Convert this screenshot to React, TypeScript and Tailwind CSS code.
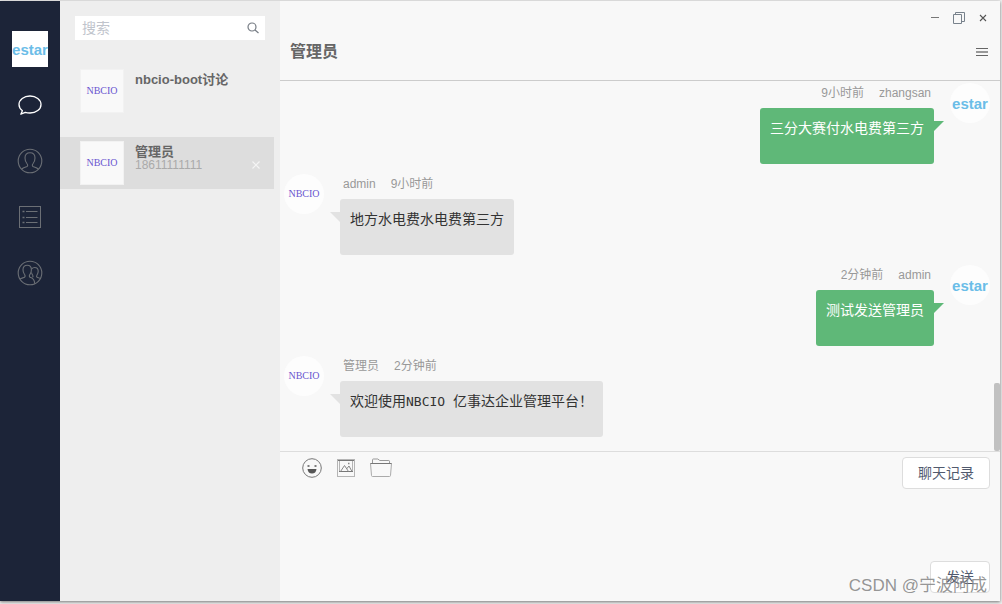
import React, { useState } from "react";

type Message = {
  id: number;
  name: string;
  time: string;
  mine: boolean;
  content: React.ReactNode;
};

const messages: Message[] = [
  {
    id: 1,
    name: "zhangsan",
    time: "9小时前",
    mine: true,
    content: "三分大赛付水电费第三方",
  },
  {
    id: 2,
    name: "admin",
    time: "9小时前",
    mine: false,
    content: "地方水电费水电费第三方",
  },
  {
    id: 3,
    name: "admin",
    time: "2分钟前",
    mine: true,
    content: "测试发送管理员",
  },
  {
    id: 4,
    name: "管理员",
    time: "2分钟前",
    mine: false,
    content: (
      <>
        欢迎使用
        <span className="font-['DejaVu_Sans_Mono',monospace] text-[13px]">
          NBCIO{" "}
        </span>
        亿事达企业管理平台！
      </>
    ),
  },
];

const contacts = [
  { id: 1, name: "nbcio-boot讨论", phone: "" },
  { id: 2, name: "管理员", phone: "18611111111" },
];

function NbcioLogo() {
  return (
    <span className="font-['Liberation_Serif',serif] text-[10px] leading-none text-[#6a55d0]">
      NBCIO
    </span>
  );
}

function EstarLogo() {
  return (
    <span className="font-['Liberation_Sans',sans-serif] text-[15px] leading-none font-bold text-[#6bbde8]">
      estar
    </span>
  );
}

function ChatIcon() {
  return (
    <svg width="24" height="24" viewBox="0 0 24 24" fill="none" stroke="#fff" strokeWidth="1.3">
      <path d="M4.4 17.7C2.3 16.1 1 14 1 11.5 1 6.6 5.900 3 12 3s11 3.600 11 8.500-4.900 8.500-11 8.500c-1.700 0-3.200-.2-4.700-.7L2.800 21.200l1.600-3.500z" strokeLinejoin="round" />
    </svg>
  );
}

function UserIcon() {
  return (
    <svg width="26" height="26" viewBox="0 0 26 26" fill="none" stroke="#6b6f75" strokeWidth="1.1">
      <circle cx="13" cy="13" r="11.8" />
      <path d="M4.7 21.2c1.300-1.700 3.400-2 5.300-2.700 1-.5.8-2-.1-3-1.200-1.400-1.900-3.300-1.900-5.500C8 6.600 9.900 4.800 13 4.800s5 1.800 5 5.200c0 2.200-.7 4.100-1.900 5.500-.9 1-1.100 2.500-.1 3 1.900.7 4 1 5.300 2.700" />
    </svg>
  );
}

function ListIcon() {
  return (
    <svg width="24" height="24" viewBox="0 0 24 24" fill="none" stroke="#6b6f75">
      <rect x="1.5" y="1.5" width="21" height="21" />
      <path d="M8 6.5h11.5M8 12.5h11.5M8 17.5h11.5" />
      <path d="M4.5 6.5h2M4.5 12.5h2M4.5 17.5h2" strokeWidth="1.5" />
    </svg>
  );
}

function GroupIcon() {
  return (
    <svg width="26" height="26" viewBox="0 0 26 26" fill="none" stroke="#6b6f75" strokeWidth="1.1">
      <circle cx="13" cy="13" r="11.8" />
      <path d="M3 19.200c1.300-1.400 3.300-1.200 4.500-2 .9-.7.6-1.900-.1-2.900C6.600 13.100 6 11.600 6 9.700 6 6.900 7.600 5.200 10.200 5.200s4.200 1.700 4.200 4.500c0 1.900-.5 3.400-1.400 4.600-.7 1-.9 2.200 0 2.900 1.500.8 4.500.8 4.700 6.500" />
      <path d="M14.700 9c.7-1 1.700-1.500 3-1.500 2.300 0 3.500 1.500 3.500 3.700 0 1.600-.5 2.800-1.200 3.800-.6.9-.6 1.700.1 2.200.9.5 2.200.5 3.300 1.300M14.500 12.500c.2 1 .6 1.800 1.100 2.500.6.9.6 1.700-.1 2.200" />
    </svg>
  );
}

function SearchIcon() {
  return (
    <svg width="12" height="12" viewBox="0 0 12 12" fill="none" stroke="#777d85" strokeWidth="1.2">
      <circle cx="5" cy="5" r="4" />
      <path d="M8 8l3.5 3" />
    </svg>
  );
}

function FaceIcon() {
  return (
    <svg width="20" height="20" viewBox="0 0 20 20" fill="none" stroke="#777">
      <circle cx="10" cy="10" r="9.3" />
      <path d="M5.5 11h9c-.3 3-2 4.5-4.5 4.5S5.8 14 5.5 11z" fill="#555" stroke="none" />
      <path d="M5.5 8h2M12.5 8h2" stroke="#555" strokeWidth="1.6" />
    </svg>
  );
}

function ImageIcon() {
  return (
    <svg width="20" height="20" viewBox="0 0 20 20" fill="none" stroke="#888">
      <rect x="1.5" y="1.5" width="17" height="17" stroke="#b5b5b5" />
      <path d="M3.5 2.5v11M16.5 2.5v11" stroke="#b5b5b5" />
      <path d="M2 2.5h16M3 13.5h14" stroke="#777" />
      <path d="M4.5 13.5l4-6 4 6M10.5 11l2.5-3 3 5.5" />
      <path d="M12 5.5h1.5" strokeWidth="1.5" />
    </svg>
  );
}

function FolderIcon() {
  return (
    <svg width="22" height="20" viewBox="0 0 22 20" fill="none" stroke="#888">
      <path d="M.5 5.5h21l-1 12c0 .6-.4 1-1 1h-17c-.6 0-1-.4-1-1l-1-12z" stroke="#aaa" />
      <path d="M2.5 5V1.7c0-.4.3-.7.7-.7h4.6l2 1.5h9c.4 0 .7.3.7.7V5" stroke="#999" />
      <path d="M.5 5.5h21" stroke="#777" />
    </svg>
  );
}

function SideBar() {
  return (
    <nav className="w-[60px] shrink-0 bg-[#1c2438] flex flex-col items-center pt-[30px]">
      <div className="size-9 bg-white flex items-center justify-center">
        <EstarLogo />
      </div>
      <div className="mt-2.5 flex flex-col">
        <button aria-label="消息" className="size-14 flex items-center justify-center">
          <ChatIcon />
        </button>
        <button aria-label="联系人" className="size-14 flex items-center justify-center">
          <UserIcon />
        </button>
        <button aria-label="列表" className="size-14 flex items-center justify-center">
          <ListIcon />
        </button>
        <button aria-label="群组" className="size-14 flex items-center justify-center">
          <GroupIcon />
        </button>
      </div>
    </nav>
  );
}

function ContactList() {
  const [active, setActive] = useState(2);

  return (
    <aside className="w-[220px] shrink-0 bg-[#eee] pt-[15px]">
      <div className="ml-[15px] mr-[15px] h-6 bg-white flex items-center pl-[7px] pr-1.5">
        <input
          type="text"
          aria-label="搜索"
          placeholder="搜索"
          className="min-w-0 flex-1 text-[14px] leading-5 outline-none placeholder:text-[#c0c4cc]"
        />
        <SearchIcon />
      </div>
      <ul className="mt-[25px] mr-1.5 flex flex-col gap-5">
        {contacts.map((item) => (
          <li
            key={item.id}
            onClick={() => setActive(item.id)}
            className={
              "h-[52px] flex pl-5 pr-3 " +
              (active === item.id ? "bg-[#ddd]" : "")
            }
          >
            <div className="mt-1 size-11 shrink-0 border border-[#f2f2f2] bg-[#f9f9f9] flex items-center justify-center">
              <NbcioLogo />
            </div>
            <div className="ml-[11px] flex-1 pt-2">
              <h2 className="text-[13px] leading-[14px] font-bold text-[#666]">
                {item.name}
              </h2>
              <p className="text-[12px] leading-3 text-[#aaa]">{item.phone}</p>
            </div>
            {active === item.id && (
              <button aria-label="删除" className="mt-1 text-[#f4f4f4]">
                <svg width="12" height="12" viewBox="0 0 12 12" fill="none" stroke="currentColor" strokeWidth="1.2">
                  <path d="M2.5 2.5l7 7M9.5 2.5l-7 7" />
                </svg>
              </button>
            )}
          </li>
        ))}
      </ul>
    </aside>
  );
}

function ChatHeader() {
  return (
    <header className="border-b border-[#ccc] pb-[11px] shrink-0">
      <div className="h-[34px] flex items-center justify-end gap-3 pr-[11px] text-[#777]">
        <button aria-label="最小化">
          <svg width="12" height="12" viewBox="0 0 12 12" stroke="currentColor">
            <path d="M2 5.5h8" />
          </svg>
        </button>
        <button aria-label="还原">
          <svg width="12" height="12" viewBox="0 0 12 12" fill="none" stroke="#78828c">
            <path d="M.5 2.5h8v9h-8zM2.5 2V.5h9v9H9" />
          </svg>
        </button>
        <button aria-label="关闭">
          <svg width="12" height="12" viewBox="0 0 12 12" stroke="#555" strokeWidth="1.1">
            <path d="M3 3l6 6M9 3L3 9" />
          </svg>
        </button>
      </div>
      <div className="h-[34px] flex items-center justify-between pl-2.5 pr-3">
        <h1 className="text-[16px] leading-5 font-bold text-[#666]">管理员</h1>
        <button aria-label="菜单">
          <svg width="12" height="8" viewBox="0 0 12 8" stroke="#666">
            <path d="M0 .5h12M0 7.5h12" />
            <path d="M0 4h12" strokeWidth="2" stroke="#999" />
          </svg>
        </button>
      </div>
    </header>
  );
}

function MessageItem({ message }: { message: Message }) {
  const { mine, name, time, content } = message;

  return (
    <li className={"flex gap-4 " + (mine ? "flex-row-reverse" : "")}>
      <div className="size-10 shrink-0 rounded-full bg-[#fdfdfd] flex items-center justify-center">
        {mine ? <EstarLogo /> : <NbcioLogo />}
      </div>
      <div className={"flex flex-col " + (mine ? "items-end" : "items-start")}>
        <div
          className={
            "h-5 px-[3px] flex items-center gap-[15px] text-[12px] leading-5 text-[#999] " +
            (mine ? "" : "flex-row-reverse")
          }
        >
          <span>{time}</span>
          <span>{name}</span>
        </div>
        <div
          className={
            "relative mt-[5px] min-h-14 rounded-[3px] px-2.5 py-2.5 text-[14px] leading-5 " +
            (mine ? "bg-[#5fb878] text-white" : "bg-[#e2e2e2] text-[#333]")
          }
        >
          {content}
          <span
            className={
              "absolute top-[13px] size-0 border-b-[10px] border-b-transparent " +
              (mine
                ? "left-full border-l-[10px] border-l-[#5fb878]"
                : "right-full border-r-[10px] border-r-[#e2e2e2]")
            }
          />
        </div>
      </div>
    </li>
  );
}

function ChatFooter() {
  return (
    <footer className="h-[150px] shrink-0 border-t border-[#ddd] flex flex-col pt-[5px] pr-2.5 pb-2">
      <div className="flex items-start justify-between pl-[22px]">
        <div className="h-[22px] flex items-center gap-3.5">
          <button aria-label="表情">
            <FaceIcon />
          </button>
          <button aria-label="图片">
            <ImageIcon />
          </button>
          <button aria-label="文件">
            <FolderIcon />
          </button>
        </div>
        <button className="h-8 px-[15px] rounded-[4px] border border-[#ddd] bg-white text-[14px] leading-5 text-[#515a6e]">
          聊天记录
        </button>
      </div>
      <textarea aria-label="消息内容" className="flex-1 resize-none outline-none px-2.5 text-[14px]" />
      <div className="flex justify-end">
        <button className="h-8 px-[15px] rounded-[4px] border border-[#ddd] bg-white text-[14px] leading-5 text-[#515a6e]">
          发送
        </button>
      </div>
    </footer>
  );
}

function App() {
  return (
    <div className="relative h-screen bg-[#eee] pt-px pr-0.5 pb-[3px] font-['Liberation_Sans','Noto_Sans_CJK_SC',sans-serif]">
      <div className="h-full flex shadow-[0_1px_3px_rgba(0,0,0,0.5)]">
        <SideBar />
        <ContactList />
        <main className="min-w-0 flex-1 bg-[#f8f8f8] flex flex-col">
          <ChatHeader />
          <div className="relative min-h-0 flex-1">
            <ul className="h-full overflow-hidden pt-0.5 pl-1 pr-2.5 flex flex-col gap-2.5">
              {messages.map((message) => (
                <MessageItem key={message.id} message={message} />
              ))}
            </ul>
            {/* scrollbar thumb */}
            <div className="absolute right-0 bottom-0 w-1.5 h-[68px] rounded-[2px] bg-[#c1c1c1]" />
          </div>
          <ChatFooter />
        </main>
      </div>
      <span className="absolute right-[15px] bottom-1.5 text-[17px] leading-6 text-[#888]/90 pointer-events-none">
        CSDN @宁波阿成
      </span>
    </div>
  );
}

export default App;
